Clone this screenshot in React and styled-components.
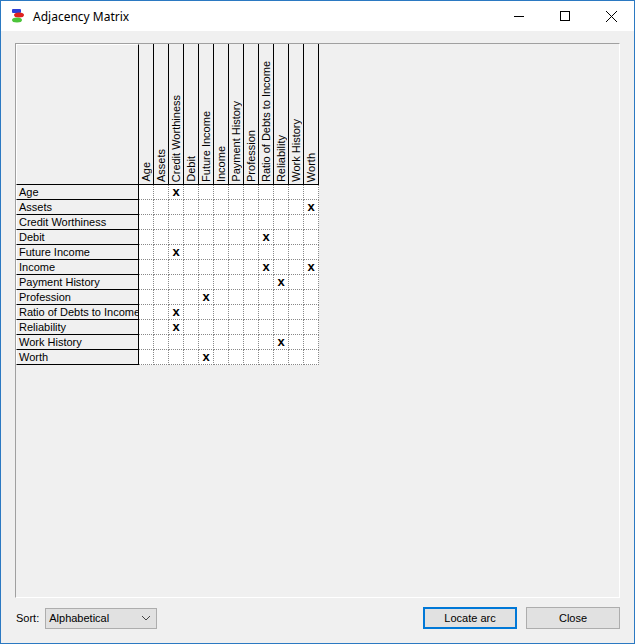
import React from "react";
import styled, { createGlobalStyle } from "styled-components";

const Global = createGlobalStyle`
  html, body { margin: 0; padding: 0; }
  body { font-family: "Liberation Sans", Arial, sans-serif; }
`;

const Window = styled.div`
  width: 635px;
  height: 644px;
  box-sizing: border-box;
  border: 1px solid #2b79c2;
  background: #f0f0f0;
  display: flex;
  flex-direction: column;
`;

const TitleBar = styled.div`
  height: 30px;
  background: #fff;
  display: flex;
  align-items: center;
  padding-left: 9px;
  flex-shrink: 0;
`;

const Title = styled.div`
  font-family: "Noto Sans", "Open Sans", sans-serif;
  font-size: 12px;
  margin-left: 7px;
  flex: 1;
  color: #000;
`;

const Ctrl = styled.div`
  width: 46px;
  height: 30px;
  display: flex;
  align-items: center;
  justify-content: center;
`;

const Body = styled.div`
  flex: 1;
  display: flex;
  flex-direction: column;
  padding: 12px 14px 12px 14px;
`;

const Panel = styled.div`
  height: 555px;
  box-sizing: border-box;
  border-top: 1px solid #a0a0a0;
  border-left: 1px solid #a0a0a0;
  border-right: 1px solid #fff;
  border-bottom: 1px solid #fff;
  background: #f0f0f0;
`;

const Grid = styled.div`
  display: grid;
  grid-template-columns: 123px repeat(12, 15px);
  grid-template-rows: 141px repeat(12, 15px);
  font-size: 11px;
  color: #000;
`;

const Corner = styled.div`
  border-right: 1px solid #000;
  border-bottom: 1px solid #000;
  border-left: 1px solid #fff;
  border-top: 1px solid #fff;
  box-sizing: border-box;
`;

const ColHead = styled.div`
  box-sizing: border-box;
  border-right: 1px solid #000;
  border-bottom: 1px solid #000;
  display: flex;
  justify-content: center;
  align-items: flex-end;
  overflow: hidden;
  span {
    writing-mode: vertical-rl;
    transform: rotate(180deg);
    white-space: nowrap;
    padding-top: 2px;
    line-height: 13px;
  }
`;

const RowHead = styled.div`
  box-sizing: border-box;
  border-right: 1px solid #000;
  border-bottom: 1px solid #000;
  border-left: 1px solid #fff;
  padding-left: 2px;
  line-height: 14px;
  white-space: nowrap;
  overflow: hidden;
`;

const Cell = styled.div`
  box-sizing: border-box;
  background: #fff;
  border-right: 1px dotted #888;
  border-bottom: 1px dotted #888;
  display: flex;
  align-items: center;
  justify-content: center;
  font-weight: bold;
  font-size: 13px;
  line-height: 14px;
`;

const Footer = styled.div`
  display: flex;
  align-items: center;
  margin-top: 9px;
  height: 22px;
`;

const Label = styled.span`
  font-size: 11px;
  margin-left: 1px;
  margin-right: 6px;
`;

const Select = styled.div`
  width: 112px;
  height: 21px;
  box-sizing: border-box;
  border: 1px solid #adadad;
  background: #e1e1e1;
  font-size: 11px;
  display: flex;
  align-items: center;
  justify-content: space-between;
  padding: 0 6px 0 3px;
`;

const Button = styled.div`
  width: 94px;
  height: 22px;
  box-sizing: border-box;
  border: ${(p) => (p.$default ? "2px solid #0078d7" : "1px solid #adadad")};
  background: #e1e1e1;
  font-size: 11px;
  display: flex;
  align-items: center;
  justify-content: center;
  margin-left: ${(p) => p.$gap || 0}px;
`;

const nodes = [
  "Age", "Assets", "Credit Worthiness", "Debit", "Future Income", "Income",
  "Payment History", "Profession", "Ratio of Debts to Income", "Reliability",
  "Work History", "Worth",
];

const marks = {
  0: [2], 1: [11], 3: [8], 4: [2], 5: [8, 11], 6: [9], 7: [4], 8: [2], 9: [2], 10: [9], 11: [4],
};

const Logo = () => (
  <svg width="16" height="16" viewBox="0 0 16 16">
    <rect x="2" y="1" width="9" height="4" rx="1" fill="#2c3ed6" />
    <ellipse cx="9" cy="7" rx="5" ry="2.5" fill="#e02020" />
    <ellipse cx="7" cy="12" rx="5" ry="2.5" fill="#4cc43a" />
  </svg>
);

export default function App() {
  return (
    <>
      <Global />
      <Window>
        <TitleBar>
          <Logo />
          <Title>Adjacency Matrix</Title>
          <Ctrl>
            <svg width="10" height="10"><line x1="0" y1="5.5" x2="10" y2="5.5" stroke="#000" /></svg>
          </Ctrl>
          <Ctrl>
            <svg width="10" height="10"><rect x="0.5" y="0.5" width="9" height="9" fill="none" stroke="#000" /></svg>
          </Ctrl>
          <Ctrl>
            <svg width="11" height="11"><path d="M0 0L11 11M11 0L0 11" stroke="#000" /></svg>
          </Ctrl>
        </TitleBar>
        <Body>
          <Panel>
            <Grid>
              <Corner />
              {nodes.map((n) => (
                <ColHead key={n}><span>{n}</span></ColHead>
              ))}
              {nodes.map((n, r) => (
                <React.Fragment key={n}>
                  <RowHead>{n}</RowHead>
                  {nodes.map((_, c) => (
                    <Cell key={c}>{marks[r] && marks[r].includes(c) ? "x" : ""}</Cell>
                  ))}
                </React.Fragment>
              ))}
            </Grid>
          </Panel>
          <Footer>
            <Label>Sort:</Label>
            <Select>
              Alphabetical
              <svg width="8" height="5"><path d="M0 0L4 4L8 0" fill="none" stroke="#444" /></svg>
            </Select>
            <div style={{ flex: 1 }} />
            <Button $default>Locate arc</Button>
            <Button $gap={9}>Close</Button>
          </Footer>
        </Body>
      </Window>
    </>
  );
}
